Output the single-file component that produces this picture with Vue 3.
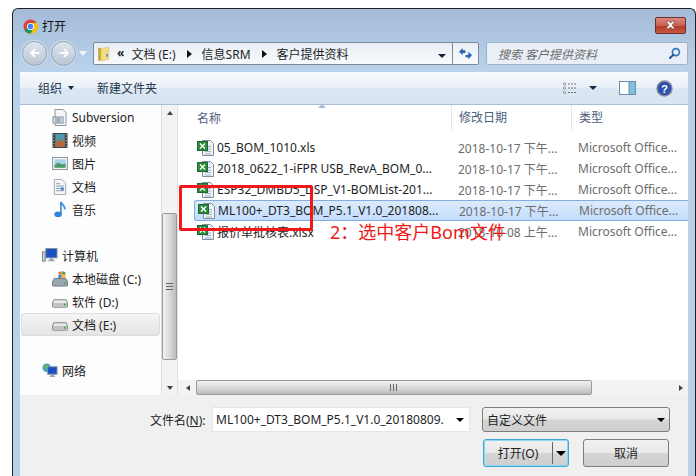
<template>
  <div class="page">
    <div class="win">
      <header class="title-bar">
        <svg class="chrome" viewBox="0 0 16 16" width="15" height="15">
          <circle cx="8" cy="8" r="7.5" fill="#db4437" />
          <path d="M8 8 1.5 11.8A7.5 7.5 0 0 0 8 15.5L11.8 8.9Z" fill="#0f9d58" />
          <path d="M8 4.2h6.9A7.5 7.5 0 0 1 8 15.5L11.5 9.5Z" fill="#f4c20d" />
          <circle cx="8" cy="8" r="3.8" fill="#fff" />
          <circle cx="8" cy="8" r="2.9" fill="#4285f4" />
        </svg>
        <span class="title-text">打开</span>
        <button class="close-btn">
          <svg viewBox="0 0 16 10" width="15" height="10">
            <path d="M3 1h3l2 2 2-2h3l-3.4 4L13 9h-3L8 7 6 9H3l3.4-4Z" fill="#fff" stroke="#5a3a3a" stroke-width=".6" />
          </svg>
        </button>
      </header>

      <div class="nav-row">
        <div class="nav-orb">
          <span class="orb">
            <svg viewBox="0 0 16 16" width="14" height="14"><path d="M13 8H4M8 3.5 3.5 8 8 12.5" fill="none" stroke="#fff" stroke-width="2.2" /></svg>
          </span>
          <span class="orb">
            <svg viewBox="0 0 16 16" width="14" height="14"><path d="M3 8h9M8 3.5 12.5 8 8 12.5" fill="none" stroke="#fff" stroke-width="2.2" /></svg>
          </span>
          <i class="orb-caret"></i>
        </div>
        <div class="address">
          <svg class="addr-folder" viewBox="0 0 14 18" width="13" height="16">
            <path d="M1 2h3l1 1v13L1 17Z" fill="#c9a53f" />
            <path d="M4 3 13 1v14l-9 2Z" fill="#f3dc82" stroke="#d0b45a" stroke-width=".5" />
            <rect x="10" y="9" width="2" height="3" fill="#5b8fc9" />
          </svg>
          <span class="crumb-back">«</span>
          <span class="crumb">文档 (E:)</span>
          <i class="crumb-arrow"></i>
          <span class="crumb">信息SRM</span>
          <i class="crumb-arrow"></i>
          <span class="crumb">客户提供资料</span>
          <i class="addr-caret"></i>
          <span class="addr-refresh">
            <svg viewBox="0 0 16 14" width="15" height="13">
              <path d="M1 5 5 1v2.5h3V6.5H5V9Z" fill="#2a66b5" />
              <path d="M15 8 11 13v-2.500H8V8h3V4.500Z" fill="#2a66b5" transform="translate(0 .5)" />
            </svg>
          </span>
        </div>
        <div class="search">
          <span>搜索 客户提供资料</span>
          <svg viewBox="0 0 14 14" width="13" height="13">
            <circle cx="8.500" cy="5.500" r="3.800" fill="none" stroke="#2f77c4" stroke-width="1.800" />
            <path d="M6 8 1.500 12.500" stroke="#1c4f8f" stroke-width="2.200" />
          </svg>
        </div>
      </div>

      <div class="toolbar">
        <span class="tool">组织<i class="tool-caret"></i></span>
        <span class="tool tool-new">新建文件夹</span>
        <span class="tool-right">
          <svg viewBox="0 0 16 13" width="16" height="13">
            <path d="M1.500 1h2v2h-2zM1.500 5h2v2h-2zM1.500 9.500h2v2h-2z" fill="#fff" stroke="#8a8f94" stroke-width=".8" />
            <path d="M6 2h9M6 6h9M6 10.500h9" stroke="#6f767d" stroke-dasharray="2 1" />
          </svg>
          <i class="tool-caret view-caret"></i>
          <svg class="pane-icon" viewBox="0 0 17 14" width="17" height="14">
            <rect x=".5" y=".5" width="16" height="13" fill="#fff" stroke="#6a8eae" />
            <rect x="10" y="1" width="6" height="12" fill="#7fc0dc" />
            <path d="M10 .5v13" stroke="#6a8eae" />
          </svg>
          <svg class="help-icon" viewBox="0 0 18 18" width="17" height="17">
            <circle cx="9" cy="9" r="8" fill="#2b50b0" stroke="#8a8f98" stroke-width="1.500" />
            <text x="9" y="13.500" text-anchor="middle" font-size="12" font-weight="700" fill="#fff" font-family="Liberation Sans, sans-serif">?</text>
          </svg>
        </span>
      </div>

      <svg width="0" height="0" class="defs">
        <symbol id="xls" viewBox="0 0 17 16">
          <path d="M5.500 .5h8l3 3v12h-11Z" fill="#eef2f6" stroke="#7f8f9f" />
          <path d="M8 6.500h6M8 9h6M8 11.500h6M8 14h6" stroke="#9fb2c4" />
          <rect x=".5" y="1.500" width="10" height="9" fill="#2f8a3f" stroke="#1f6a2e" />
          <path d="M3 3.500l5 5M8 3.500l-5 5" stroke="#fff" stroke-width="1.300" />
        </symbol>
        <symbol id="drive" viewBox="0 0 17 10">
          <path d="M2 1.500h13l1.500 3.500v3.500a1 1 0 0 1-1 1h-14a1 1 0 0 1-1-1V5Z" fill="#e6e8ea" stroke="#7d8287" />
          <path d="M1 5h15v4H1Z" fill="#bfc3c7" />
          <rect x="12.500" y="5.500" width="2" height="2.500" fill="#4cae3c" />
        </symbol>
      </svg>

      <main class="panes">
        <nav class="side">
          <div v-for="item in sideItems" :key="item.id" class="side-row" :class="[item.cls, { 'side-on': item.on }]">
            <svg v-if="item.icon === 'doc'" class="side-icon" viewBox="0 0 16 17" width="16" height="17">
              <path d="M3 .5h8l3 3v13H3Z" fill="#f4f6f9" stroke="#8c98a6" />
              <rect x="1" y="8" width="10" height="6" fill="#dfe7ef" stroke="#7b8794" />
              <path d="M3 10h6M3 12h6" stroke="#6e7b89" />
            </svg>
            <svg v-else-if="item.icon === 'video'" class="side-icon" viewBox="0 0 16 16" width="15" height="15">
              <rect width="16" height="16" fill="#3a3f45" />
              <rect x="3" y="1" width="10" height="14" fill="#4f9ab0" />
              <path d="M3 11l4-5 3 3 3-2v8H3Z" fill="#b3683a" />
              <path d="M1 2h1M1 5h1M1 8h1M1 11h1M1 14h1M14 2h1M14 5h1M14 8h1M14 11h1M14 14h1" stroke="#ddd" />
            </svg>
            <svg v-else-if="item.icon === 'pic'" class="side-icon" viewBox="0 0 17 14" width="16" height="13">
              <rect x=".5" y=".5" width="16" height="13" fill="#eef1f4" stroke="#8a949e" />
              <rect x="2.500" y="2.500" width="12" height="9" fill="#a9d3ea" />
              <path d="M2.500 11.500v-3l4-2.500 4 2 4-1v4.500Z" fill="#4e9a62" />
            </svg>
            <svg v-else-if="item.icon === 'page'" class="side-icon" viewBox="0 0 14 17" width="13" height="16">
              <path d="M1 .5h8l4 4v12H1Z" fill="#f4f6f9" stroke="#9aa4af" />
              <path d="M3 5h4M3 7.500h8M3 10h8M3 12.500h8" stroke="#7f93a8" />
              <rect x="8" y="9" width="3" height="3" fill="#4a83c4" />
            </svg>
            <svg v-else-if="item.icon === 'music'" class="side-icon" viewBox="0 0 14 18" width="13" height="17">
              <ellipse cx="5" cy="14" rx="4" ry="3" fill="#2f83d6" />
              <path d="M8 14V1c1 3 5 4 4 8" fill="none" stroke="#3b8fdc" stroke-width="1.800" />
            </svg>
            <svg v-else-if="item.icon === 'pc'" class="side-icon" viewBox="0 0 17 16" width="16" height="15">
              <rect x="4" y=".5" width="12" height="10" fill="#1b4fc4" stroke="#8a949e" />
              <path d="M8 11h4v2h2v1H6v-1h2Z" fill="#9aa4af" />
              <rect x=".5" y="4" width="3" height="10" fill="#c7ccd2" stroke="#7d8287" />
            </svg>
            <svg v-else-if="item.icon === 'sysdrive'" class="side-icon" viewBox="0 0 17 17" width="16" height="16">
              <path d="M7 1 10 .5v3l-3 .5ZM10.500 .5 14 1v3l-3.500-.5ZM7 4.500l3-.5v3l-3 .5ZM10.500 4l3.500.5v3l-3.500-.5Z" fill="#e8643a" />
              <path d="M10.500 .5 14 1v3l-3.500-.5Z" fill="#5ea83c" />
              <path d="M7 4.500l3-.5v3l-3 .5Z" fill="#2f83d6" />
              <path d="M10.500 4l3.500.5v3l-3.500-.5Z" fill="#f2c230" />
              <path d="M2.500 8h12l2 3v4a1 1 0 0 1-1 1h-14a1 1 0 0 1-1-1v-4Z" fill="#9aa6ae" stroke="#6d7780" />
              <rect x="12.500" y="12" width="2" height="2" fill="#4cae3c" />
            </svg>
            <svg v-else-if="item.icon === 'drive'" class="side-icon drive" width="16" height="10"><use href="#drive" /></svg>
            <svg v-else-if="item.icon === 'net'" class="side-icon" viewBox="0 0 17 16" width="16" height="15">
              <circle cx="5" cy="5" r="4.500" fill="#3aa0d8" />
              <path d="M2 3l3-2 2 2-2 3-3 0Z" fill="#5cb85c" />
              <rect x="6" y="4" width="10" height="8" fill="#1b4fc4" stroke="#8a949e" />
              <path d="M9 12h4v2h1v1H8v-1h1Z" fill="#9aa4af" />
            </svg>
            <span class="side-label">{{ item.label }}</span>
          </div>
        </nav>

        <div class="scroll-v">
          <i class="arrow-up"></i>
          <div class="thumb-v"><span class="grip-h"></span></div>
          <i class="arrow-down"></i>
        </div>

        <section class="files">
          <div class="file-head">
            <span class="col-name">名称<i class="sort"></i></span>
            <span class="col-date">修改日期</span>
            <span class="col-type">类型</span>
          </div>
          <div class="file-list">
            <div v-for="f in files" :key="f.name" class="file-row" :class="{ 'file-on': f.on }">
              <span class="col-name file-name">
                <svg class="xls-icon" width="17" height="16"><use href="#xls" /></svg>{{ f.name }}
              </span>
              <span class="col-date">{{ f.date }}</span>
              <span class="col-type">Microsoft Office...</span>
            </div>
          </div>
          <div class="scroll-h">
            <i class="arrow-left"></i>
            <div class="thumb-h"><span class="grip-v"></span></div>
            <i class="arrow-right"></i>
          </div>
        </section>
      </main>

      <footer class="bottom">
        <div class="bottom-row">
          <label class="fname-label">文件名(<u>N</u>):</label>
          <div class="fname-input">
            <span>ML100+_DT3_BOM_P5.1_V1.0_20180809.</span>
            <i class="black-caret"></i>
          </div>
          <div class="filter-box">
            <span>自定义文件</span>
            <i class="black-caret"></i>
          </div>
        </div>
        <div class="bottom-row btn-row">
          <div class="btn btn-open">
            <span class="btn-main">打开(O)</span>
            <span class="btn-split"><i class="black-caret big"></i></span>
          </div>
          <div class="btn btn-cancel">取消</div>
        </div>
      </footer>
    </div>

    <div class="red-box"></div>
    <div class="red-note">2：选中客户Bom文件</div>
  </div>
</template>

<script setup>
const sideItems = [
  { id: 1, icon: 'doc', label: 'Subversion' },
  { id: 2, icon: 'video', label: '视频' },
  { id: 3, icon: 'pic', label: '图片' },
  { id: 4, icon: 'page', label: '文档' },
  { id: 5, icon: 'music', label: '音乐' },
  { id: 6, icon: 'pc', label: '计算机', cls: 'side-top' },
  { id: 7, icon: 'sysdrive', label: '本地磁盘 (C:)' },
  { id: 8, icon: 'drive', label: '软件 (D:)' },
  { id: 9, icon: 'drive', label: '文档 (E:)', on: true },
  { id: 10, icon: 'net', label: '网络', cls: 'side-top' },
]

const files = [
  { name: '05_BOM_1010.xls', date: '2018-10-17 下午...' },
  { name: '2018_0622_1-iFPR USB_RevA_BOM_0...', date: '2018-10-17 下午...' },
  { name: 'ESP32_DMBD5_DSP_V1-BOMList-201...', date: '2018-10-17 下午...' },
  { name: 'ML100+_DT3_BOM_P5.1_V1.0_201808...', date: '2018-10-17 下午...', on: true },
  { name: '报价单批核表.xlsx', date: '2018-10-08 上午...' },
]
</script>

<style>
html, body { margin: 0; background: #fff; }
</style>

<style scoped>
.page {
  position: relative;
  width: 696px;
  height: 476px;
  overflow: hidden;
  padding: 8px 0 0 12px;
  box-sizing: border-box;
  background: #fff;
  font-family: "Noto Sans", "Noto Sans CJK SC", sans-serif;
  font-size: 12px;
  color: #1e1e1e;
}
.win {
  width: 684px;
  height: 468px;
  box-sizing: border-box;
  border: 1px solid #222;
  border-bottom: 0;
  border-radius: 6px 6px 0 0;
  padding: 0 7px;
  background: linear-gradient(#a3bbd6 0, #b9d2ec 60px, #b9d2ec 100%);
  display: flex;
  flex-direction: column;
}
.title-bar {
  height: 32px;
  flex: none;
  display: flex;
  align-items: center;
}
.chrome { margin: 2px 0 0 3px; }
.title-text { margin: 2px 0 0 4px; font-size: 12px; color: #111; }
.close-btn {
  margin-left: auto;
  margin-right: 2px;
  width: 31px;
  height: 17px;
  padding: 0;
  border: 1px solid #6e2c2c;
  border-radius: 2px;
  background: linear-gradient(#d9897c 0, #c9614f 50%, #b23a26 55%, #c8593f 100%);
  display: flex;
  align-items: center;
  justify-content: center;
}
.nav-row {
  height: 31px;
  flex: none;
  display: flex;
  align-items: flex-start;
}
.nav-orb {
  width: 71px;
  flex: none;
  display: flex;
  align-items: center;
  gap: 4px;
  height: 24px;
  margin-left: 2px;
}
.orb {
  width: 23px;
  height: 23px;
  flex: none;
  border-radius: 50%;
  border: 1px solid #98a6b6;
  box-shadow: 0 0 0 1px #d3dde8;
  background: linear-gradient(#dfe6ee, #b9c5d2);
  display: flex;
  align-items: center;
  justify-content: center;
}
.orb-caret {
  width: 0;
  height: 0;
  border: 4px solid transparent;
  border-top: 5px solid #f0f4f8;
  margin: 5px 0 0 -1px;
}
.address {
  width: 386px;
  height: 23px;
  flex: none;
  margin-top: 1px;
  box-sizing: border-box;
  border: 1px solid #7d8a98;
  border-radius: 2px;
  background: linear-gradient(#e8eef5, #f8fafc);
  display: flex;
  align-items: center;
  padding-left: 3px;
}
.addr-folder { flex: none; }
.crumb-back { margin: -3px 7px 0 7px; font-weight: 700; font-size: 12px; }
.crumb { white-space: nowrap; }
.crumb-arrow {
  width: 0;
  height: 0;
  border: 4px solid transparent;
  border-left: 5px solid #111;
  border-right: 0;
  margin: 0 10px 0 11px;
}
.addr-caret {
  width: 0;
  height: 0;
  margin-left: auto;
  margin-top: 4px;
  border: 4px solid transparent;
  border-top: 4px solid #13233f;
  border-bottom: 0;
}
.addr-refresh {
  width: 25px;
  height: 21px;
  margin-left: 6px;
  border-left: 1px solid #7d8a98;
  display: flex;
  align-items: center;
  justify-content: center;
}
.search {
  width: 202px;
  height: 23px;
  flex: none;
  margin: 1px 0 0 7px;
  box-sizing: border-box;
  border: 1px solid #a2b2c4;
  border-radius: 2px;
  background: #e9eff6;
  display: flex;
  align-items: center;
  justify-content: space-between;
  padding: 0 6px 0 11px;
  font-style: italic;
  color: #6d6d6d;
}
.toolbar {
  height: 33px;
  flex: none;
  box-sizing: border-box;
  border-bottom: 1px solid #a9bdd4;
  background: linear-gradient(#f8fafd 0, #eaf0f8 48%, #dce6f3 52%, #d9e4f2 100%);
  display: flex;
  align-items: center;
  color: #24384f;
}
.tool { display: flex; align-items: center; margin-left: 18px; }
.tool-new { margin-left: 23px; }
.tool-caret {
  width: 0;
  height: 0;
  margin-left: 6px;
  border: 3.500px solid transparent;
  border-top: 4px solid #16294a;
  border-bottom: 0;
}
.tool-right { margin-left: auto; display: flex; align-items: center; padding-right: 15px; }
.view-caret { margin-left: 11px; border-width: 4px 4px 0; }
.pane-icon { margin-left: 22px; }
.help-icon { margin-left: 20px; }
.defs { position: absolute; }
.panes {
  height: 290px;
  flex: none;
  display: grid;
  grid-template-columns: 141px 17px 1fr;
  background: #fff;
}
.side { padding-top: 1px; overflow: hidden; background: #fdfdfd; }
.side-row {
  height: 23px;
  box-sizing: border-box;
  display: flex;
  align-items: center;
  padding-left: 30px;
  margin: 0 1px 0 1px;
  border: 1px solid transparent;
  border-radius: 3px;
  white-space: nowrap;
}
.side-top { margin-top: 23px; padding-left: 20px; }
.side-on {
  border-color: #dcdcdc;
  background: linear-gradient(#f5f5f5, #e4e4e4);
}
.side-icon { flex: none; width: 16px; margin-right: 4px; }
.drive { height: 10px; margin-top: 3px; }
.side-label { color: #222; }
.scroll-v {
  box-sizing: border-box;
  border-left: 1px solid #dcdcdc;
  border-right: 1px solid #e3e3e3;
  background: #f3f3f3;
  display: flex;
  flex-direction: column;
  align-items: center;
  padding: 6px 0 5px;
}
.arrow-up, .arrow-down {
  flex: none;
  width: 0;
  height: 0;
  border: 3.500px solid transparent;
}
.arrow-up { border-bottom: 4px solid #444; border-top: 0; }
.arrow-down { border-top: 4px solid #444; border-bottom: 0; margin-top: auto; }
.thumb-v {
  width: 15px;
  height: 147px;
  margin-top: 98px;
  box-sizing: border-box;
  border: 1px solid #9a9a9a;
  border-radius: 2px;
  background: linear-gradient(90deg, #f2f2f2, #d6d6d6 55%, #bcbcbc);
  display: flex;
  align-items: center;
  justify-content: center;
}
.grip-h {
  width: 7px;
  height: 7px;
  background: repeating-linear-gradient(#666 0 1px, transparent 1px 3px);
}
.files {
  min-width: 0;
  display: flex;
  flex-direction: column;
}
.file-head {
  height: 25px;
  flex: none;
  display: flex;
  align-items: center;
  color: #4c607a;
}
.col-name {
  width: 273px;
  flex: none;
  padding-left: 19px;
  box-sizing: border-box;
  position: relative;
}
.col-date {
  width: 120px;
  flex: none;
  padding-left: 7px;
  box-sizing: border-box;
  white-space: nowrap;
  color: #6d6d6d;
}
.col-type {
  flex: 1;
  padding-left: 7px;
  white-space: nowrap;
  color: #6d6d6d;
}
.file-head .col-date, .file-head .col-type { color: #4c607a; }
.file-head .col-date { border-left: 1px solid #e4e8ee; height: 25px; line-height: 25px; }
.file-head .col-type { border-left: 1px solid #e4e8ee; height: 25px; line-height: 25px; }
.sort {
  position: absolute;
  left: 140px;
  top: -5px;
  border: 4px solid transparent;
  border-bottom: 4px solid #a6bfd6;
  border-top: 0;
}
.file-list {
  flex: 1;
  padding: 7px 0 0 16px;
}
.file-row {
  height: 21px;
  display: flex;
  align-items: center;
  box-sizing: border-box;
  margin-left: 0;
}
.file-row .col-name { width: 257px; padding-left: 3px; }
.file-name {
  display: flex;
  align-items: center;
  gap: 3px;
  white-space: nowrap;
  color: #1e1e1e;
}
.xls-icon { flex: none; }
.file-on {
  border: 1px solid #84acdd;
  border-right: 0;
  border-radius: 3px 0 0 3px;
  background: linear-gradient(#dcebfc, #c2dcfd);
}
.scroll-h {
  height: 15px;
  flex: none;
  background: #f3f3f3;
  display: flex;
  align-items: center;
  padding: 0 5px 0 8px;
}
.arrow-left, .arrow-right {
  width: 0;
  height: 0;
  flex: none;
  border: 3.500px solid transparent;
}
.arrow-left { border-right: 4px solid #444; border-left: 0; }
.arrow-right { border-left: 4px solid #444; border-right: 0; margin-left: auto; }
.thumb-h {
  width: 396px;
  height: 15px;
  margin-left: 6px;
  box-sizing: border-box;
  border: 1px solid #9a9a9a;
  border-radius: 2px;
  background: linear-gradient(#f2f2f2, #d6d6d6 55%, #bcbcbc);
  display: flex;
  align-items: center;
  justify-content: center;
}
.grip-v {
  width: 8px;
  height: 7px;
  background: repeating-linear-gradient(90deg, #666 0 1px, transparent 1px 3px);
}
.bottom {
  flex: 1;
  background: #f0f0f0;
  padding-top: 12px;
}
.bottom-row {
  display: flex;
  align-items: center;
  height: 25px;
}
.fname-label { margin-left: 130px; width: 62px; color: #222; white-space: nowrap; }
.fname-input {
  width: 258px;
  height: 25px;
  flex: none;
  box-sizing: border-box;
  border: 1px solid #e2e6ea;
  background: #fff;
  display: flex;
  align-items: center;
  justify-content: space-between;
  padding: 0 5px 0 3px;
  white-space: nowrap;
  overflow: hidden;
}
.black-caret {
  flex: none;
  width: 0;
  height: 0;
  border: 4px solid transparent;
  border-top: 4px solid #000;
  border-bottom: 0;
}
.black-caret.big { border-width: 5px 5px 0; }
.filter-box {
  width: 188px;
  height: 25px;
  flex: none;
  margin-left: 12px;
  box-sizing: border-box;
  border: 1px solid #7d7d7d;
  border-radius: 3px;
  background: linear-gradient(#f1f1f1 0, #e8e8e8 48%, #d5d5d5 52%, #cfcfcf 100%);
  display: flex;
  align-items: center;
  justify-content: space-between;
  padding: 0 4px;
}
.btn-row { margin-top: 7px; height: 28px; padding-left: 463px; }
.btn {
  height: 28px;
  box-sizing: border-box;
  border: 1px solid #7d7d7d;
  border-radius: 3px;
  background: linear-gradient(#f1f1f1 0, #e8e8e8 48%, #d5d5d5 52%, #cfcfcf 100%);
  display: flex;
  align-items: center;
  justify-content: center;
}
.btn-open {
  width: 86px;
  border-color: #3ca8d8;
  box-shadow: inset 0 0 0 1px #8fd6f2;
}
.btn-main { flex: 1; text-align: center; }
.btn-split {
  width: 15px;
  height: 22px;
  border-left: 1px solid #666;
  display: flex;
  align-items: center;
  justify-content: center;
}
.btn-cancel { width: 86px; margin-left: 14px; }
.red-box {
  position: absolute;
  left: 179px;
  top: 185px;
  width: 134px;
  height: 46px;
  box-sizing: border-box;
  border: 3px solid #f01818;
  border-radius: 2px;
}
.red-note {
  position: absolute;
  left: 330px;
  top: 219px;
  font-size: 18px;
  line-height: 26px;
  color: #f01818;
  white-space: nowrap;
}
</style>
